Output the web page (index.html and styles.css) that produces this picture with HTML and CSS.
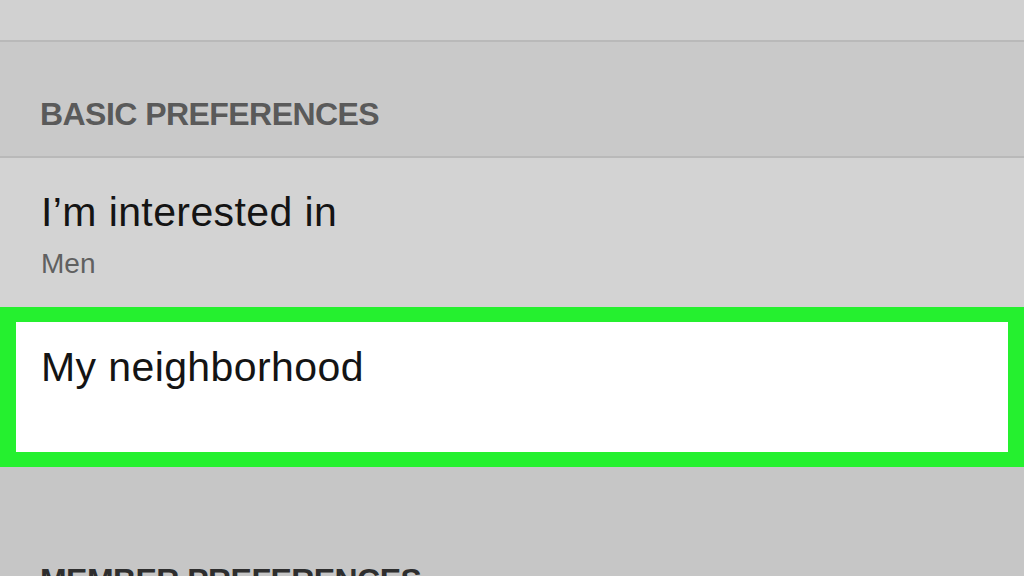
FILE: index.html
```html
<!DOCTYPE html>
<html lang="en">
<head>
<meta charset="utf-8">
<title>Preferences</title>
<link rel="stylesheet" href="styles.css">
</head>
<body>
<div class="screen">
  <div class="top"></div>
  <div class="section-head">BASIC PREFERENCES</div>
  <div class="row">
    <div class="row-title">I’m interested in</div>
    <div class="row-sub">Men</div>
  </div>
  <div class="row highlight">
    <div class="row-title">My neighborhood</div>
  </div>
  <div class="section-head second">MEMBER PREFERENCES</div>
</div>
</body>
</html>
```
FILE: styles.css
```css
html, body {
  margin: 0;
  padding: 0;
  background: #c6c6c6;
}
.screen {
  width: 1024px;
  height: 576px;
  overflow: hidden;
  font-family: "Liberation Sans", Arial, sans-serif;
}
.top {
  height: 40px;
  background: #d1d1d1;
  border-bottom: 2px solid #b9b9b9;
}
.section-head {
  background: #c9c9c9;
  color: #5a5a5a;
  font-weight: bold;
  font-size: 32px;
  line-height: 32px;
  padding: 56px 0 26px 40px;
  letter-spacing: -0.55px;
  border-bottom: 2px solid #b9b9b9;
}
.row {
  background: #d3d3d3;
  padding: 34px 0 29px 41px;
}
.row-title {
  font-size: 41px;
  line-height: 41px;
  letter-spacing: 0.4px;
  color: #141414;
}
.row-sub {
  margin-top: 17px;
  font-size: 28px;
  line-height: 28px;
  color: #606060;
}
.highlight {
  background: #ffffff;
  border-style: solid;
  border-color: #25f02f;
  border-width: 15px 16px;
  box-sizing: border-box;
  height: 160px;
  padding: 25px 0 0 25px;
}
.section-head.second {
  background: #c6c6c6;
  color: #2e2e2e;
  padding-top: 97px;
  border-bottom: none;
}
```
